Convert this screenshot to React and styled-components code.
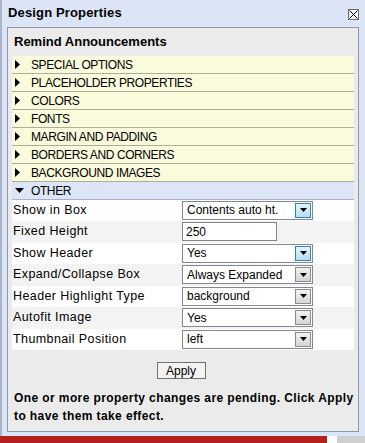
import React from 'react';
import styled, { createGlobalStyle } from 'styled-components';

const GlobalStyle = createGlobalStyle`
  html, body {
    margin: 0;
    padding: 0;
    background: #ffffff;
  }
  body {
    font-family: "Liberation Sans", Arial, sans-serif;
    font-size: 12px;
    color: #000;
  }
`;

const sections = [
  'SPECIAL OPTIONS',
  'PLACEHOLDER PROPERTIES',
  'COLORS',
  'FONTS',
  'MARGIN AND PADDING',
  'BORDERS AND CORNERS',
  'BACKGROUND IMAGES'
];

const props = [
  { label: 'Show in Box', value: 'Contents auto ht.', hot: true },
  { label: 'Fixed Height', value: '250', input: true },
  { label: 'Show Header', value: 'Yes', hot: true },
  { label: 'Expand/Collapse Box', value: 'Always Expanded' },
  { label: 'Header Highlight Type', value: 'background' },
  { label: 'Autofit Image', value: 'Yes' },
  { label: 'Thumbnail Position', value: 'left' }
];

const App = () => (
  <>
    <GlobalStyle />
    <Page>
      <Window>
        <TitleBar>
          <Title>Design Properties</Title>
          <CloseBox>
            <svg width="9" height="9" viewBox="0 0 9 9">
              <path d="M0.5 0.5 L8.5 8.5 M8.5 0.5 L0.5 8.5" stroke="#000" strokeWidth="1" />
            </svg>
          </CloseBox>
        </TitleBar>
        <Panel>
          <PanelHeader>Remind Announcements</PanelHeader>
          <Sections>
            {sections.map((s) => (
              <SectionRow key={s}>
                <Arrow viewBox="0 0 5 9" width="5" height="9">
                  <path d="M0 0 L5 4.5 L0 9 Z" fill="#000" />
                </Arrow>
                {s}
              </SectionRow>
            ))}
            <SectionRow $open>
              <Arrow viewBox="0 0 9 5" width="9" height="5">
                <path d="M0 0 L9 0 L4.5 5 Z" fill="#000" />
              </Arrow>
              OTHER
            </SectionRow>
          </Sections>
          <PropTable>
            {props.map((p, i) => (
              <PropRow key={p.label} $alt={i % 2 === 1} $tall={i % 2 === 0}>
                <PropLabel>{p.label}</PropLabel>
                {p.input ? (
                  <TextBox>{p.value}</TextBox>
                ) : (
                  <Select>
                    <SelectText>{p.value}</SelectText>
                    <DropBtn $hot={p.hot}>
                      <svg width="7" height="4" viewBox="0 0 7 4">
                        <path d="M0 0 L7 0 L3.5 4 Z" fill="#000" />
                      </svg>
                    </DropBtn>
                  </Select>
                )}
              </PropRow>
            ))}
          </PropTable>
          <ApplyWrap>
            <ApplyButton>Apply</ApplyButton>
          </ApplyWrap>
          <Pending>
            One or more property changes are pending. Click Apply to have them take effect.
          </Pending>
        </Panel>
      </Window>
      <BottomBar>
        <RedPart />
        <WhitePart />
        <GreyPart />
      </BottomBar>
    </Page>
  </>
);

const Page = styled.div`
  width: 365px;
  height: 443px;
  display: flex;
  flex-direction: column;
  overflow: hidden;
`;

const Window = styled.div`
  height: 436px;
  box-sizing: border-box;
  background: #dbe5f5;
  border-left: 2px solid #a9b6ca;
  padding: 0 6px 0 5px;
  display: flex;
  flex-direction: column;
`;

const TitleBar = styled.div`
  height: 27px;
  display: flex;
  align-items: center;
  justify-content: space-between;
`;

const Title = styled.div`
  font-weight: bold;
  font-size: 13px;
  letter-spacing: 0.15px;
  padding-left: 1px;
  margin-top: -3px;
`;

const CloseBox = styled.div`
  width: 11px;
  height: 11px;
  box-sizing: border-box;
  border: 1px solid #6f6f6f;
  background: #f4f6fa;
  display: flex;
  align-items: center;
  justify-content: center;
  margin-top: 1px;
  svg {
    width: 9px;
    height: 9px;
  }
`;

const Panel = styled.div`
  height: 405px;
  box-sizing: border-box;
  border: 1px solid #8d9aae;
  background: #ebebeb;
  padding: 0 4px 0 4px;
  display: flex;
  flex-direction: column;
`;

const PanelHeader = styled.div`
  height: 28px;
  display: flex;
  align-items: center;
  font-weight: bold;
  font-size: 13px;
  padding-left: 2px;
  padding-bottom: 1px;
  box-sizing: border-box;
`;

const Sections = styled.div`
  display: flex;
  flex-direction: column;
`;

const SectionRow = styled.div`
  height: 17px;
  border-bottom: 1px solid ${(p) => (p.$open ? '#a8b4c6' : '#aeae98')};
  background: ${(p) => (p.$open ? '#dce6f6' : '#fafadc')};
  display: flex;
  align-items: center;
  gap: ${(p) => (p.$open ? 7 : 11)}px;
  padding-left: 3px;
  font-size: 12px;
  letter-spacing: -0.4px;
`;

const Arrow = styled.svg`
  width: ${(p) => p.width}px;
  flex: 0 0 auto;
`;

const PropTable = styled.div`
  display: flex;
  flex-direction: column;
`;

const PropRow = styled.div`
  height: ${(p) => (p.$tall ? 21 : 22)}px;
  background: ${(p) => (p.$alt ? '#f3f3f3' : '#ffffff')};
  display: grid;
  grid-template-columns: 169px auto;
  align-items: center;
  padding-left: 1px;
`;

const PropLabel = styled.div`
  font-size: 12.5px;
  letter-spacing: 0.4px;
  margin-top: -2px;
`;

const Select = styled.div`
  width: 131px;
  height: 19px;
  box-sizing: border-box;
  border: 1px solid #828790;
  background: #fff;
  display: flex;
  align-items: center;
  justify-content: space-between;
  padding: 1px 1px 1px 4px;
  margin-top: -1px;
`;

const SelectText = styled.span`
  font-size: 12px;
`;

const DropBtn = styled.div`
  width: 16px;
  height: 15px;
  box-sizing: border-box;
  border: 1px solid ${(p) => (p.$hot ? '#3c7fb1' : '#8a8a8a')};
  background: ${(p) =>
    p.$hot
      ? 'linear-gradient(#e5f4fc, #b4ddf4)'
      : 'linear-gradient(#f2f2f2, #d5d5d5)'};
  display: flex;
  align-items: center;
  justify-content: center;
`;

const TextBox = styled.div`
  width: 95px;
  height: 19px;
  box-sizing: border-box;
  border: 1px solid #848484;
  background: #fff;
  font-size: 12px;
  display: flex;
  align-items: center;
  padding-left: 3px;
  margin-top: -1px;
`;

const ApplyWrap = styled.div`
  display: flex;
  justify-content: center;
  padding-top: 12px;
  padding-right: 4px;
`;

const ApplyButton = styled.div`
  width: 49px;
  height: 17px;
  box-sizing: border-box;
  border: 1px solid #707070;
  background: #f3f3f3;
  font-size: 12px;
  display: flex;
  align-items: center;
  justify-content: center;
`;

const Pending = styled.div`
  font-weight: bold;
  font-size: 12px;
  letter-spacing: 0.4px;
  line-height: 18px;
  padding: 10px 0 0 2px;
`;

const BottomBar = styled.div`
  height: 7px;
  display: flex;
`;

const RedPart = styled.div`
  width: 327px;
  background: #b3211d;
`;

const WhitePart = styled.div`
  width: 10px;
  background: #ffffff;
`;

const GreyPart = styled.div`
  flex: 1;
  background: #cfcfcf;
`;

export default App;
